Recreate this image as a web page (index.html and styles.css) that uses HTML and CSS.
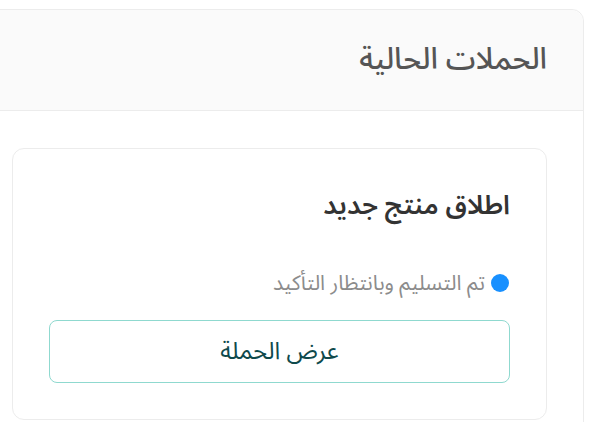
FILE: index.html
```html
<!DOCTYPE html>
<html lang="ar" dir="rtl">
<head>
<meta charset="utf-8">
<link rel="stylesheet" href="styles.css">
</head>
<body>
<div class="page">
  <section class="panel">
    <header class="panel-head">
      <h2 class="panel-title">الحملات الحالية</h2>
    </header>
    <div class="panel-body">
      <article class="card">
        <h3 class="card-title">اطلاق منتج جديد</h3>
        <div class="status"><span class="dot"></span><span class="status-text">تم التسليم وبانتظار التأكيد</span></div>
        <button class="btn">عرض الحملة</button>
      </article>
    </div>
  </section>
</div>
</body>
</html>
```
FILE: styles.css
```css
html, body { margin: 0; padding: 0; background: #fff; }
body { font-family: "Noto Sans Arabic", "Noto Sans", "DejaVu Sans", sans-serif; overflow: hidden; }
.page { padding-top: 9px; padding-right: 10px; }
.panel {
  margin-left: -25px;
  border: 1px solid #ececec;
  border-radius: 12px;
  background: #fff;
}
.panel-head {
  background: #fafafa;
  border-bottom: 1px solid #ececec;
  border-radius: 12px 12px 0 0;
  height: 100px;
  display: flex;
  align-items: center;
  padding: 0 36px;
}
.panel-title { margin: 0; font-size: 30px; font-weight: 500; color: #555; line-height: 40px; }
.panel-body { padding: 37px 36px 20px; }
.card {
  border: 1px solid #ececec;
  border-radius: 12px;
  padding: 37px 36px 36px;
  display: flex;
  flex-direction: column;
}
.card-title { margin: 0; font-size: 26.5px; font-weight: 600; color: #333; line-height: 40px; }
.status { display: flex; align-items: center; gap: 6px; margin-top: 45px; height: 24px; }
.dot { width: 18px; height: 18px; border-radius: 50%; background: #1890ff; flex: none; margin-right: 1px; }
.status-text { font-size: 21px; color: #8c8c8c; line-height: 24px; }
.btn {
  margin-top: 25px;
  height: 63px;
  border: 1px solid #8fd9cf;
  border-radius: 8px;
  background: #fff;
  font-family: inherit;
  font-size: 24px;
  color: #0f4a4c;
  padding: 0;
}
```
